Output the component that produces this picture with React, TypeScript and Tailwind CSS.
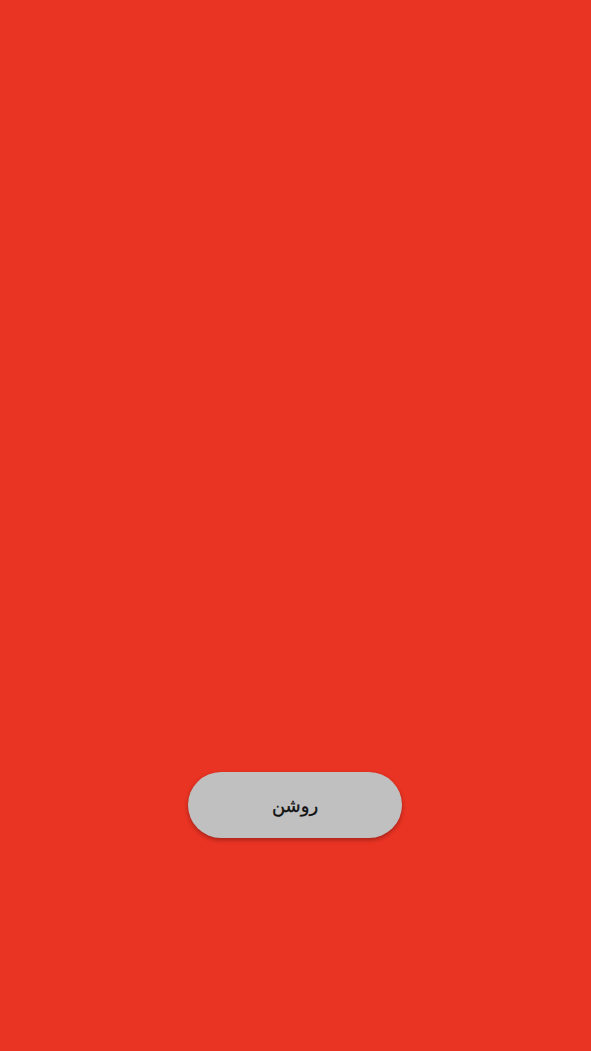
import React from 'react';

export default function App() {
  return (
    <div className="flex h-screen w-full flex-col items-center justify-end bg-[#e93323] pb-[213px]">
      <button
        dir="rtl"
        className="ml-[-1px] flex h-[66px] w-[214px] items-center justify-center rounded-full bg-[#c0c0c0] font-['DejaVu_Sans','Noto_Sans',sans-serif] text-[18px] text-[#111111] shadow-[0_2px_4px_rgba(0,0,0,0.3)] [-webkit-text-stroke:0.3px_#111111]"
      >
        روشن
      </button>
    </div>
  );
}
